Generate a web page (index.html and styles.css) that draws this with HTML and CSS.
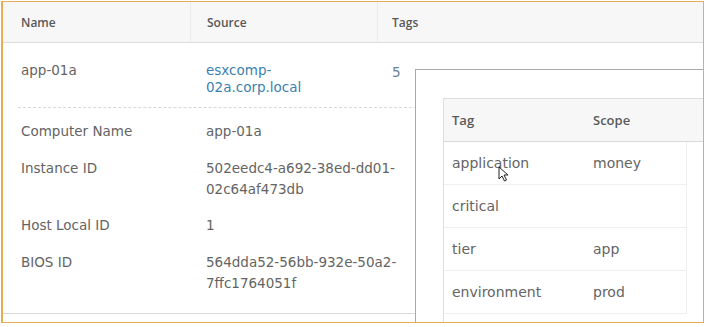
FILE: index.html
```html
<!DOCTYPE html>
<html>
<head>
    <title>Virtual Machines</title>
    <meta name="viewport" content="width=device-width, initial-scale=1.0">
    <link rel="stylesheet" href="styles.css">
</head>
<body>
    <div class="frame">
        <div class="grid-header">
            <div class="col col-name">Name</div>
            <div class="col col-source">Source</div>
            <div class="col col-tags">Tags</div>
        </div>

        <div class="grid-row">
            <div class="cell cell-name">app-01a</div>
            <div class="cell cell-source"><a href="#" class="link">esxcomp-<br>02a.corp.local</a></div>
            <div class="cell cell-tags"><a href="#" class="tag-count">5</a></div>
        </div>

        <div class="details">
            <div class="detail-row">
                <span class="detail-label">Computer Name</span>
                <span class="detail-value">app-01a</span>
            </div>
            <div class="detail-row">
                <span class="detail-label">Instance ID</span>
                <span class="detail-value">502eedc4-a692-38ed-dd01-<br>02c64af473db</span>
            </div>
            <div class="detail-row">
                <span class="detail-label">Host Local ID</span>
                <span class="detail-value">1</span>
            </div>
            <div class="detail-row">
                <span class="detail-label">BIOS ID</span>
                <span class="detail-value">564dda52-56bb-932e-50a2-<br>7ffc1764051f</span>
            </div>
        </div>

        <!-- tags popover opened from the "5" link -->
        <div class="tags-pop">
            <div class="tag-card">
                <div class="tag-head">
                    <div class="tag-col">Tag</div>
                    <div class="tag-col scope">Scope</div>
                </div>
                <div class="tag-body">
                    <div class="tag-row">
                        <div class="tag-col">application</div>
                        <div class="tag-col scope">money</div>
                    </div>
                    <div class="tag-row">
                        <div class="tag-col">critical</div>
                        <div class="tag-col scope"></div>
                    </div>
                    <div class="tag-row">
                        <div class="tag-col">tier</div>
                        <div class="tag-col scope">app</div>
                    </div>
                    <div class="tag-row">
                        <div class="tag-col">environment</div>
                        <div class="tag-col scope">prod</div>
                    </div>
                </div>
            </div>
        </div>

        <svg class="pointer" width="11" height="16" viewBox="0 0 11 16">
            <path d="M1 1 L1 13 L4 10 L6.5 15 L8.5 14 L6 9 L10 9 Z" fill="#fff" stroke="#222" stroke-width="1" stroke-linejoin="round"/>
        </svg>
    </div>
</body>
</html>
```

FILE: styles.css
```css
body {
    margin: 0;
    background-color: white;
    font-family: "DejaVu Sans", sans-serif;
    color: #646464;
}
.frame {
    position: relative;
    margin: 1px 0 0 1px;
    width: 700px;
    height: 320px;
    border: 1px solid #e5ad55;
    border-left-width: 2px;
    overflow: hidden;
    background-color: white;
}
.grid-header {
    display: flex;
    height: 40px;
    background-color: #f7f7f7;
    border-bottom: 1px solid #dcdcdc;
    font-family: "Open Sans", sans-serif;
    font-weight: 600;
    font-size: 12px;
    color: #575757;
}
.col {
    display: flex;
    align-items: center;
    border-right: 1px solid #ebebeb;
}
.col-name {
    width: 169px;
    padding-left: 18px;
}
.col-source {
    width: 170px;
    padding-left: 16px;
}
.col-tags {
    flex: 1;
    padding-left: 14px;
    border-right: none;
}
.grid-row {
    display: flex;
    margin-left: 15px;
    height: 64px;
    border-bottom: 1px dashed #d8d8d8;
    font-size: 13.5px;
    line-height: 17px;
}
.cell {
    padding-top: 19px;
}
.cell-name {
    width: 172px;
    padding-left: 3px;
}
.cell-source {
    width: 184px;
    padding-left: 13px;
}
.cell-tags {
    padding-top: 21px;
    padding-left: 2px;
}
.link {
    color: #3b7fb0;
    text-decoration: none;
}
.tag-count {
    color: #6a8196;
    text-decoration: none;
}
.details {
    height: 192px;
    padding: 13px 0 0 18px;
    border-bottom: 1px solid #d9d9d9;
    font-size: 13.5px;
    line-height: 21px;
}
.detail-row {
    display: flex;
    margin-bottom: 15.5px;
}
.detail-label {
    width: 185px;
}
.tags-pop {
    position: absolute;
    left: 412px;
    top: 67px;
    right: 0;
    bottom: 0;
    padding: 28px 0 0 27px;
    background-color: white;
    border-top: 1px solid #a9a9a9;
    border-left: 1px solid #a9a9a9;
}
.tag-card {
    border: 1px solid #dedede;
    border-right: none;
    border-bottom: none;
    height: 100%;
}
.tag-head {
    display: flex;
    align-items: center;
    height: 42px;
    background-color: #f7f7f7;
    border-bottom: 1px solid #d9d9d9;
    font-family: "Open Sans", sans-serif;
    font-weight: 600;
    font-size: 13px;
    color: #5a5a5a;
}
.tag-body {
    margin-right: 16px;
    border-right: 1px solid #eeeeee;
    font-size: 14px;
}
.tag-row {
    display: flex;
    align-items: center;
    height: 42px;
    border-bottom: 1px solid #efefef;
}
.tag-col {
    flex-shrink: 0;
    width: 133px;
    padding-left: 8px;
}
.tag-col.scope {
    flex: 1;
    width: auto;
}
.pointer {
    position: absolute;
    left: 495px;
    top: 164px;
}
```
